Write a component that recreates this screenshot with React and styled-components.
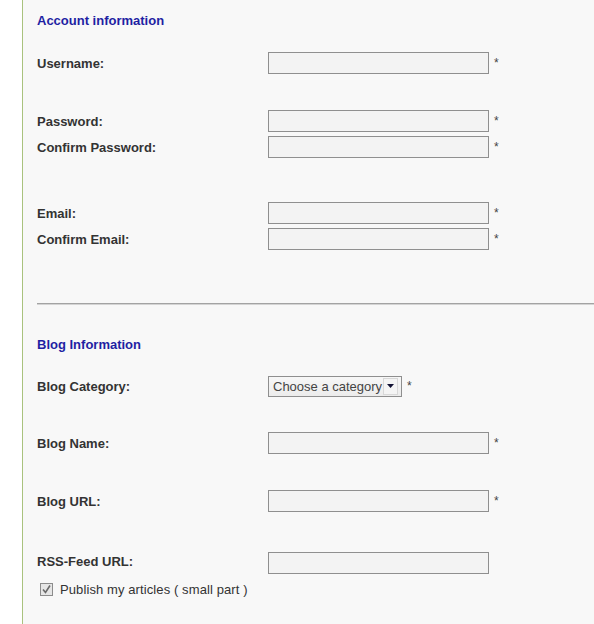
import React from "react";
import styled, { createGlobalStyle } from "styled-components";

const GlobalStyle = createGlobalStyle`
  html, body {
    margin: 0;
    padding: 0;
    background: #ffffff;
  }
  body {
    font-family: "Liberation Sans", Arial, sans-serif;
    font-size: 13px;
    color: #333333;
  }
`;

const Page = styled.div`
  display: flex;
  min-height: 624px;
  overflow: hidden;
`;

const Gutter = styled.div`
  width: 22px;
  flex-shrink: 0;
  background: #ffffff;
`;

const Content = styled.div`
  flex: 1;
  background: #f8f8f8;
  border-left: 1px solid #a9c27e;
  padding: 13px 0 30px 14px;
`;

const Heading = styled.h2`
  margin: ${({ $top }) => $top || 0}px 0 0;
  font-size: 13px;
  line-height: 15px;
  font-weight: bold;
  color: #1f1fa3;
`;

const Row = styled.div`
  display: flex;
  align-items: center;
  height: 22px;
  margin-top: ${({ $top }) => $top || 0}px;
`;

const Label = styled.label`
  width: 231px;
  flex-shrink: 0;
  font-weight: bold;
  color: #333333;
  position: relative;
  top: ${({ $shift }) => $shift || 0}px;
`;

const TextInput = styled.input`
  box-sizing: border-box;
  width: 221px;
  height: 22px;
  margin: 0;
  padding: 2px 4px;
  border: 1px solid #8f8f8f;
  background: #f3f3f3;
  font-family: inherit;
  font-size: 13px;
  outline: none;
`;

const Required = styled.span`
  margin-left: 5px;
  font-size: 12px;
  color: #444444;
  align-self: flex-start;
  padding-top: 4px;
`;

const SelectBox = styled.div`
  box-sizing: border-box;
  display: flex;
  align-items: center;
  width: 134px;
  height: 21px;
  padding: 0 3px 0 4px;
  border: 1px solid #8f8f8f;
  background: linear-gradient(#f7f7f7, #ececec);
  color: #444444;
  font-size: 13px;
`;

const SelectText = styled.span`
  flex: 1;
  white-space: nowrap;
`;

const Arrow = styled.span`
  display: flex;
  align-items: center;
  justify-content: center;
  width: 13px;
  height: 15px;
  border: 1px solid #d8d8d8;
  background: #f4f4f4;
`;

const Divider = styled.hr`
  margin: 53px 0 0;
  border: 0;
  border-top: 1px solid #a3a3a3;
  border-bottom: 1px solid #d4d4d4;
  height: 0;
`;

const CheckRow = styled.div`
  display: flex;
  align-items: center;
  height: 18px;
  margin-top: 6px;
  padding-left: 3px;
  color: #333333;
`;

const CheckText = styled.span`
  margin-left: 7px;
  letter-spacing: 0.1px;
`;

const Field = ({ label, top, shift, required = true }) => (
  <Row $top={top}>
    <Label $shift={shift}>{label}</Label>
    <TextInput type="text" />
    {required && <Required>*</Required>}
  </Row>
);

const App = () => {
  return (
    <Page>
      <GlobalStyle />
      <Gutter />
      <Content>
        <Heading>Account information</Heading>
        <Field label="Username:" top={24} />
        <Field label="Password:" top={36} />
        <Field label="Confirm Password:" top={4} />
        <Field label="Email:" top={44} />
        <Field label="Confirm Email:" top={4} />

        <Divider />

        <Heading $top={32}>Blog Information</Heading>
        <Row $top={23}>
          <Label>Blog Category:</Label>
          <SelectBox>
            <SelectText>Choose a category</SelectText>
            <Arrow>
              <svg width="7" height="4" viewBox="0 0 7 4">
                <path d="M0 0h7L3.5 4z" fill="#111133" />
              </svg>
            </Arrow>
          </SelectBox>
          <Required>*</Required>
        </Row>
        <Field label="Blog Name:" top={35} />
        <Field label="Blog URL:" top={36} />
        <Field label="RSS-Feed URL:" top={40} shift={-2} required={false} />
        <CheckRow>
          <svg width="13" height="13" viewBox="0 0 13 13">
            <rect x="0.5" y="0.5" width="12" height="12" fill="#e6e6e6" stroke="#8c8c8c" />
            <path d="M3 6.5l2.5 3L10 2.5" fill="none" stroke="#6a6a6a" strokeWidth="1.6" />
          </svg>
          <CheckText>Publish my articles ( small part )</CheckText>
        </CheckRow>
      </Content>
    </Page>
  );
};

export default App;
